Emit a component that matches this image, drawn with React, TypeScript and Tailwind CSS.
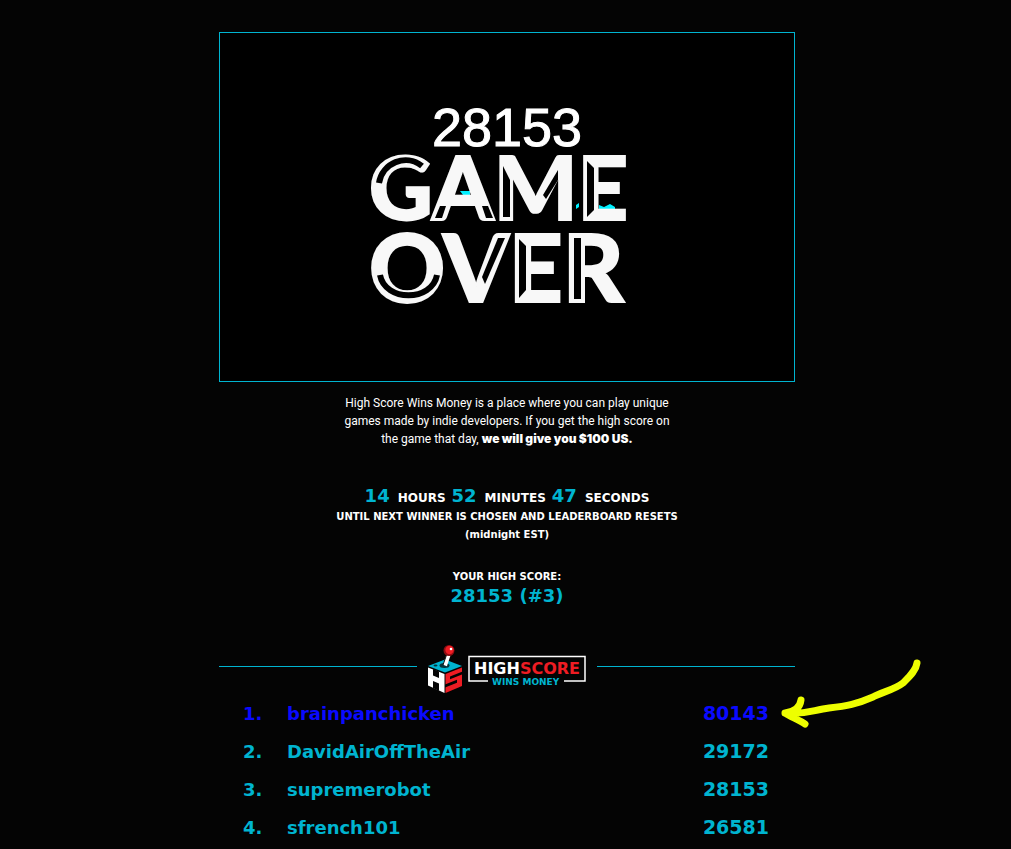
import React from "react"

const scores = [
  { rank: 1, name: "brainpanchicken", score: 80143 },
  { rank: 2, name: "DavidAirOffTheAir", score: 29172 },
  { rank: 3, name: "supremerobot", score: 28153 },
  { rank: 4, name: "sfrench101", score: 26581 },
]

const countdown = [
  { value: 14, unit: "HOURS" },
  { value: 52, unit: "MINUTES" },
  { value: 47, unit: "SECONDS" },
]

function GameOver() {
  return (
    <svg width="270" height="160" viewBox="-1 -1 270 160" role="img" aria-label="Game over" className="overflow-visible">
      {/* what is left of the level behind the letters */}
      <g fill="#00f0ff">
        <path d="M72 32 74 30H77L76 34 73 35Z" />
        <path d="M87 35H97V39H90Z" />
        <path d="M203 49 206 47V51L203 53Z" />
        <path d="M226 49 231 51 237 48 242 51V53L232 55H226Z" />
      </g>
      <g fill="#f8f8f8" stroke="#f8f8f8" strokeWidth="2" className="font-['Lato',sans-serif] font-black">
        <text x="-4" y="64" fontSize="88">GAME</text>
        <text x="-4" y="146" fontSize="94">OVER</text>
      </g>
      {/* cut-outs inside the strokes */}
      <g fill="#000">
        <path d="M62 62H69L73 50H67ZM120 62H113L109 50H115Z" />
        <path d="M130 10 137 24V61H130Z" />
        <path d="M214 5 221 12V54L214 61Z" />
        <path d="M146 83 153 90V134L146 142Z" />
        <path d="M201 82H208V143H201Z" />
        <path d="M125 82H132L112 128 109 121Z" />
        <path d="M185 14V24L173 43 170 39Z" />
      </g>
      <g fill="none" stroke="#000" strokeWidth="6">
        <path d="M6 27C9 7 33-3 49 10" />
        <path d="M7 119C12 146 59 146 64 119" />
      </g>
    </svg>
  )
}

function Logo() {
  return (
    <svg width="160" height="45" viewBox="0 0 160 45" role="img" aria-label="High Score Wins Money" className="mx-[10px] shrink-0 overflow-visible">
      {/* cube */}
      <path d="M18 15.5 35 22 18 28.5 1 22Z" fill="#00b4d0" />
      <ellipse cx="17.5" cy="21.5" rx="5" ry="2.5" fill="#05323a" />
      <ellipse cx="8.5" cy="21.5" rx="2" ry="1" fill="#05323a" />
      <path d="M1 23.5 17.5 30V49L1 41.5Z" fill="#fff" />
      <path d="M6 25 12 27.500V34L6 31.500ZM6 37 12 39.500V47L6 44Z" fill="#040404" />
      <path d="M18.500 30 35 23.500V42L18.500 49Z" fill="#ee1c23" />
      <path d="M23 32.500 35 27.800V30.500L23 35.200ZM18 40.500 30 35.700V38.800L18 43.500Z" fill="#040404" />
      {/* stick */}
      <path d="M21.500 11 18 21.500" stroke="#fff" strokeWidth="4" />
      <path d="M19.500 11 16 21" stroke="#111" strokeWidth="1" />
      <circle cx="22" cy="6.500" r="5.500" fill="#8c0d12" />
      <circle cx="22.500" cy="6" r="4.200" fill="#ee1c23" />
      <circle cx="24" cy="5" r="1.300" fill="#fff" />
      {/* frame */}
      <path d="M61 37H42V12.500H158V37H137" fill="none" stroke="#fff" strokeWidth="1.500" />
      <g className="font-['DejaVu_Sans',sans-serif] font-bold">
        <text x="47" y="30" fontSize="16" fill="#fff">
          HIGH<tspan fill="#ee1c23">SCORE</tspan>
        </text>
        <text x="65" y="41" fontSize="9" fill="#00b4d0">WINS MONEY</text>
      </g>
    </svg>
  )
}

function Arrow() {
  return (
    <svg width="142" height="72" viewBox="0 0 142 72" aria-hidden="true" className="absolute -top-[38px] left-full -ml-[14px]">
      <path
        d="M136 6C135 14 128 20 122 26C113 33 101 35 92 40C76 47 66 49 48 51C32 53 24 58 4 56M20 43C19 51 13 55 4 56C10 60 19 63 24 67"
        fill="none"
        stroke="#eeff00"
        strokeWidth="7"
        strokeLinecap="round"
        strokeLinejoin="round"
      />
    </svg>
  )
}

export default function App() {
  return (
    <div className="min-h-screen bg-[#040404] pt-8 pl-[3px] font-['DejaVu_Sans',sans-serif] font-bold text-white">
      <main className="mx-auto w-full max-w-xl">
        <section className="flex h-[350px] flex-col items-center border border-[#00b4d0] bg-black pt-[66px]">
          <p className="font-['Liberation_Sans',sans-serif] text-[54px] leading-[56px] font-normal [-webkit-text-stroke:1px_white]">
            28153
          </p>
          <GameOver />
        </section>

        <p className="mt-3 text-center font-['Roboto',sans-serif] text-xs leading-[18px] font-normal">
          High Score Wins Money is a place where you can play unique
          <br />
          games made by indie developers. If you get the high score on
          <br />
          the game that day, <strong className="font-['Inter',sans-serif] font-black">we will give you $100 US.</strong>
        </p>

        <section className="mt-[38px] text-center text-[10px] leading-[18px]">
          <p className="flex items-baseline justify-center gap-1.5 text-xs leading-5">
            {countdown.map((part) => (
              <span key={part.unit} className="flex items-baseline gap-2">
                <span className="text-lg leading-5 text-[#00b4d0]">{part.value}</span>
                {part.unit}
              </span>
            ))}
          </p>
          <p>UNTIL NEXT WINNER IS CHOSEN AND LEADERBOARD RESETS</p>
          <p>(midnight EST)</p>
        </section>

        <section className="mt-6 text-center">
          <h2 className="text-[10px] leading-[18px]">YOUR HIGH SCORE:</h2>
          <p className="text-lg leading-5 text-[#00b4d0]">28153 (#3)</p>
        </section>

        <section className="mt-[38px]">
          <header className="flex items-center">
            <span className="h-px flex-1 bg-[#00b4d0]" />
            <Logo />
            <span className="h-px flex-1 bg-[#00b4d0]" />
          </header>
          <div className="relative mt-1.5 pr-[26px] pl-6">
            <table className="w-full text-lg text-[#00b4d0]">
              <tbody>
                {scores.map((row) => (
                  <tr key={row.rank} className={row.rank === 1 ? "h-[38px] text-[#0a0aff]" : "h-[38px]"}>
                    <td className="w-11 p-0">{row.rank}.</td>
                    <td className="p-0">{row.name}</td>
                    <td className="p-0 text-right text-[19px]">{row.score}</td>
                  </tr>
                ))}
              </tbody>
            </table>
            <Arrow />
          </div>
        </section>
      </main>
    </div>
  )
}
